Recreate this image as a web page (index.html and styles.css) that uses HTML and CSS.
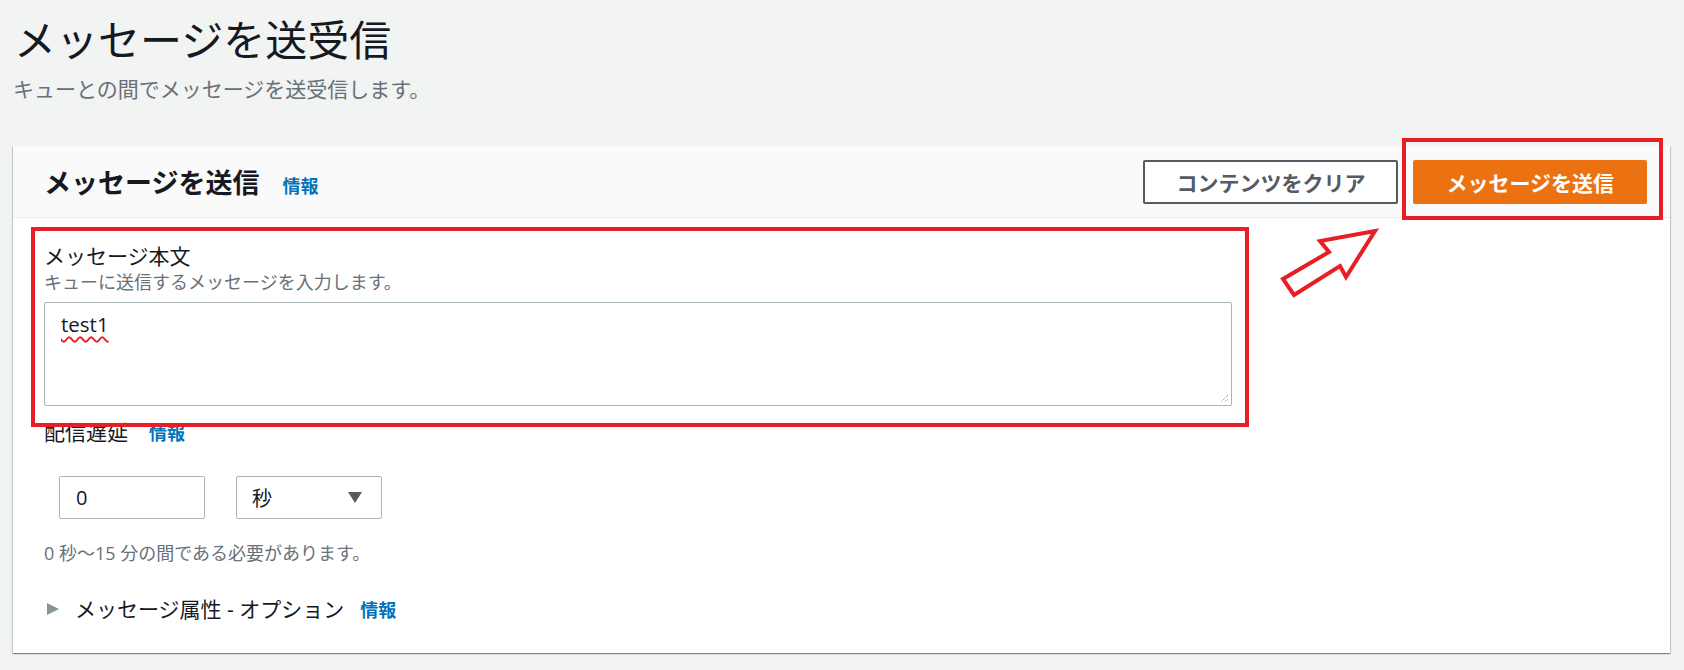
FILE: index.html
```html
<!DOCTYPE html>
<html lang="ja">
<head>
<meta charset="utf-8">
<title>メッセージを送受信</title>
<link rel="stylesheet" href="styles.css">
</head>
<body>
  <h1 class="page-title">メッセージを送受信</h1>
  <p class="page-desc">キューとの間でメッセージを送受信します。</p>

  <section class="card">
    <header class="card-header">
      <div class="card-title">
        <h2>メッセージを送信</h2>
        <a class="info">情報</a>
      </div>
      <div class="actions">
        <button class="btn btn-normal">コンテンツをクリア</button>
        <button class="btn btn-primary">メッセージを送信</button>
      </div>
    </header>

    <div class="card-body">
      <div class="field">
        <div class="label">メッセージ本文</div>
        <div class="desc">キューに送信するメッセージを入力します。</div>
        <div class="textarea">
          <span class="misspelled">test1</span>
          <svg class="resize" width="10" height="10" viewBox="0 0 10 10"><path d="M9 2 L2 9 M9 6 L6 9" stroke="#7d8889" stroke-width="1" stroke-dasharray="1 1" fill="none"/></svg>
        </div>
      </div>

      <div class="label-row">
        <span class="label">配信遅延</span>
        <a class="info">情報</a>
      </div>
      <div class="inputs">
        <div class="input">0</div>
        <div class="input select">
          <span>秒</span>
          <span class="caret"></span>
        </div>
      </div>
      <div class="hint">0 秒〜15 分の間である必要があります。</div>

      <div class="expander">
        <span class="expand-icon"></span>
        <span class="exp-text">メッセージ属性 - オプション</span>
        <a class="info">情報</a>
      </div>
    </div>

    <div class="annot annot-body"></div>
    <div class="annot annot-btn"></div>
    <svg class="annot-arrow" width="116" height="86" viewBox="0 0 116 86">
      <polygon points="105,9 50,19 59,30 13,57 24,73 70,44 76,55" fill="#fff" stroke="#e81e25" stroke-width="4" stroke-linejoin="miter"/>
    </svg>
  </section>
</body>
</html>
```

FILE: styles.css
```css
* { box-sizing: border-box; }

body {
  margin: 0;
  padding: 15px 14px 20px 13px;
  background: #f2f3f3;
  font-family: "Open Sans", "Noto Sans CJK JP", sans-serif;
  color: #16191f;
}

.page-title {
  margin: 0;
  padding-left: 1px;
  font-family: "Noto Sans CJK JP", sans-serif;
  font-size: 42px;
  line-height: 46px;
  font-weight: 400;
  color: #16191f;
}

.page-desc {
  margin: 16px 0 0;
  font-size: 21px;
  line-height: 25px;
  color: #687078;
}

.card {
  position: relative;
  margin-top: 44px;
  background: #fff;
  box-shadow: 0 1px 1px 0 rgba(0, 28, 36, 0.3), 1px 1px 1px 0 rgba(0, 28, 36, 0.15), -1px 1px 1px 0 rgba(0, 28, 36, 0.15);
}

.card-header {
  display: flex;
  align-items: center;
  justify-content: space-between;
  padding: 14px 23px 13px 31px;
  background: #fafafa;
  border-bottom: 1px solid #eaeded;
}

.card-title {
  display: flex;
  align-items: baseline;
}

.card-title h2 {
  margin: 0;
  font-family: "Noto Sans CJK JP", sans-serif;
  font-size: 27px;
  line-height: 34px;
  font-weight: 700;
  color: #16191f;
}

.info {
  font-family: "Noto Sans CJK JP", sans-serif;
  font-size: 18px;
  font-weight: 700;
  color: #0073bb;
  margin-left: 22px;
}

.card-title .info { margin-left: 23px; }

.actions {
  display: flex;
  gap: 15px;
}

.btn {
  height: 44px;
  padding: 0 31px;
  border-radius: 2px;
  font-family: "Noto Sans CJK JP", sans-serif;
  font-size: 21px;
  font-weight: 700;
  line-height: 40px;
  cursor: pointer;
}

.btn-normal {
  background: #fff;
  border: 2px solid #545b64;
  color: #545b64;
}

.btn-primary {
  background: #ec7211;
  border: 2px solid #ec7211;
  color: #fff;
}

.card-body {
  padding: 25px 31px 31px 31px;
}

.label {
  font-size: 21px;
  line-height: 26px;
  color: #16191f;
}

.desc {
  margin-top: 2px;
  font-size: 18px;
  line-height: 22px;
  color: #687078;
}

.textarea {
  position: relative;
  margin-top: 9px;
  width: 1188px;
  height: 104px;
  padding: 7px 16px;
  border: 1px solid #aab7b8;
  border-radius: 2px;
  font-size: 20.5px;
  line-height: 28px;
  color: #16191f;
}

.misspelled {
  text-decoration: underline wavy #e81e25;
  text-decoration-thickness: 1.5px;
  text-underline-offset: 4px;
}

.resize {
  position: absolute;
  right: 2px;
  bottom: 2px;
}

.label-row {
  margin-top: 13px;
  display: flex;
  align-items: baseline;
}

.label-row .info { margin-left: 21px; }

.inputs {
  display: flex;
  gap: 31px;
  margin: 31px 0 0 15px;
}

.input {
  display: flex;
  align-items: center;
  width: 146px;
  height: 43px;
  padding: 0 16px;
  border: 1px solid #aab7b8;
  border-radius: 2px;
  font-size: 20px;
  color: #16191f;
}

.select {
  justify-content: space-between;
  padding: 0 19px 0 15px;
}

.caret {
  width: 0;
  height: 0;
  border-left: 7.5px solid transparent;
  border-right: 7.5px solid transparent;
  border-top: 11px solid #545b64;
}

.hint {
  margin-top: 23px;
  font-size: 18px;
  line-height: 22px;
  color: #687078;
}

.expander {
  display: flex;
  align-items: center;
  margin-top: 32px;
  height: 26px;
  padding-left: 3px;
}

.expand-icon {
  width: 0;
  height: 0;
  border-top: 6.5px solid transparent;
  border-bottom: 6.5px solid transparent;
  border-left: 12px solid #879596;
  margin-right: 16px;
}

.exp-text {
  font-size: 21px;
  line-height: 26px;
  color: #16191f;
}

.expander .info { margin-left: 16px; }

.annot {
  position: absolute;
  border: 4px solid #e81e25;
}

.annot-body {
  left: 18px;
  top: 81px;
  width: 1218px;
  height: 200px;
}

.annot-btn {
  left: 1389px;
  top: -8px;
  width: 261px;
  height: 82px;
}

.annot-arrow {
  position: absolute;
  left: 1257px;
  top: 76px;
}
```
